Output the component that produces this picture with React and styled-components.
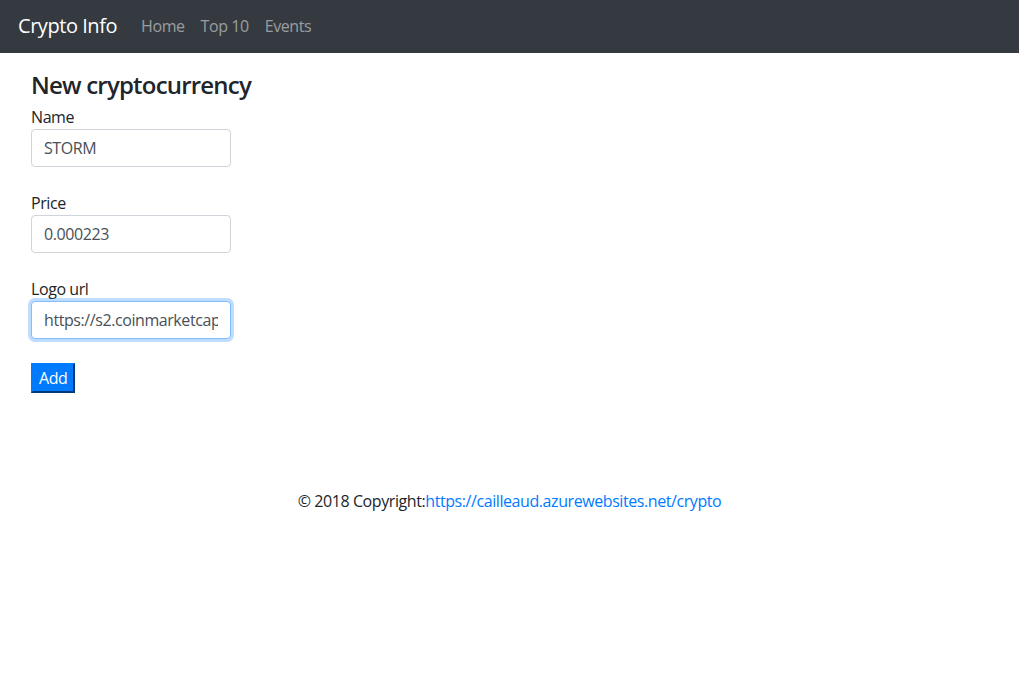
import React from 'react'
import styled, { createGlobalStyle } from 'styled-components'

const GlobalStyle = createGlobalStyle`
  body {
    margin: 0;
    font-family: "Open Sans", "Liberation Sans", sans-serif;
    font-size: 16px;
    line-height: 1.5;
    letter-spacing: -0.42px;
    color: #212529;
    background: #fff;
  }
`

const Navbar = styled.nav`
  display: flex;
  align-items: center;
  height: 53px;
  padding: 0 16px 2px 18px;
  background-color: #343a40;
  box-sizing: border-box;
`

const Brand = styled.a`
  color: #fff;
  font-size: 20px;
  letter-spacing: -0.45px;
  margin-right: 16px;
  text-decoration: none;
`

const NavLink = styled.a`
  color: rgba(255, 255, 255, 0.5);
  padding: 0 8px;
  text-decoration: none;
`

const Container = styled.main`
  padding: 18px 31px 0;
`

const Heading = styled.h4`
  font-size: 24px;
  font-weight: 600;
  letter-spacing: -0.8px;
  line-height: 1.2;
  margin: 0 0 5px;
`

const FormGroup = styled.div`
  display: flex;
  flex-direction: column;
  align-items: flex-start;
  margin-bottom: 24px;
`

const Label = styled.label`
  display: block;
`

const Input = styled.input`
  box-sizing: border-box;
  width: 200px;
  height: 38px;
  padding: 6px 12px;
  font: inherit;
  letter-spacing: inherit;
  color: #495057;
  border: 1px solid ${p => (p.$focus ? '#80bdff' : '#ced4da')};
  border-radius: 4px;
  box-shadow: ${p => (p.$focus ? '0 0 0 3px rgba(0, 123, 255, 0.25)' : 'none')};
  outline: none;
`

const AddButton = styled.button`
  box-sizing: border-box;
  height: 30px;
  padding: 0 6px;
  font: inherit;
  letter-spacing: inherit;
  color: #fff;
  background: #007bff;
  border: 2px outset #0062cc;
  border-top-color: #007bff;
  border-left-color: #007bff;
`

const Footer = styled.footer`
  text-align: center;
  margin-top: 96px;
`

const Link = styled.a`
  color: #007bff;
  text-decoration: none;
`

export default function App() {
  return (
    <>
      <GlobalStyle />
      <Navbar>
        <Brand href="#">Crypto Info</Brand>
        <NavLink href="#">Home</NavLink>
        <NavLink href="#">Top 10</NavLink>
        <NavLink href="#">Events</NavLink>
      </Navbar>
      <Container>
        <Heading>New cryptocurrency</Heading>
        <form>
          <FormGroup>
            <Label>Name</Label>
            <Input defaultValue="STORM" />
          </FormGroup>
          <FormGroup>
            <Label>Price</Label>
            <Input defaultValue="0.000223" />
          </FormGroup>
          <FormGroup>
            <Label>Logo url</Label>
            <Input $focus defaultValue="https://s2.coinmarketcap.com/static/img/coins/32x32/2387.png" />
          </FormGroup>
          <AddButton type="button">Add</AddButton>
        </form>
      </Container>
      <Footer>
        © 2018 Copyright:<Link href="#">https://cailleaud.azurewebsites.net/crypto</Link>
      </Footer>
    </>
  )
}
